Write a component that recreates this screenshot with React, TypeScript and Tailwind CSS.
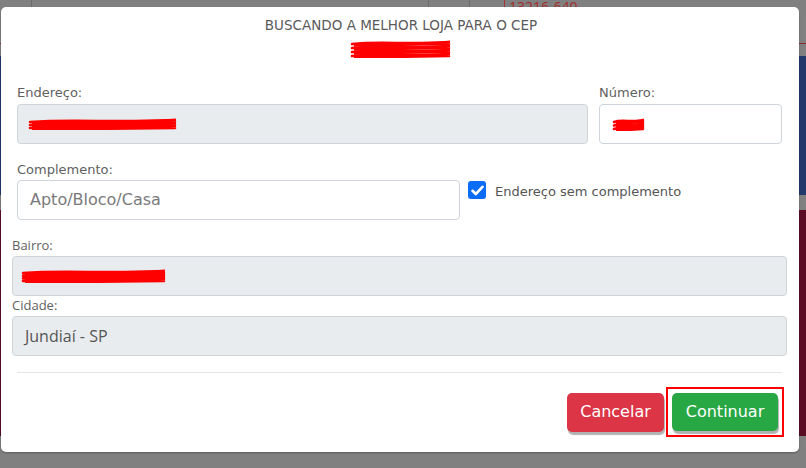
import React from "react";

const FONT = { fontFamily: '"DejaVu Sans", "Open Sans", sans-serif' };
const NARROW = { fontFamily: '"Open Sans", "Liberation Sans", sans-serif' };

// rabisco vermelho que esconde dados pessoais
const Scribble = ({ w, h, rows = 3 }: { w: number; h: number; rows?: number }) => {
  const lines = [];
  for (let i = 0; i < rows; i++) {
    const y = 3 + (i * (h - 6)) / Math.max(rows - 1, 1);
    lines.push(
      <path
        key={i}
        d={`M2 ${y + 1} C ${w * 0.3} ${y - 2}, ${w * 0.6} ${y + 2}, ${w - 2} ${y - 1} L 4 ${y + 2.5} L ${w - 3} ${y + 1}`}
        stroke="#ff0000"
        strokeWidth={2.6}
        fill="none"
        strokeLinecap="round"
      />
    );
  }
  return (
    <svg width={w} height={h} viewBox={`0 0 ${w} ${h}`}>
      {lines}
    </svg>
  );
};

const Label = ({ children, narrow }: { children: React.ReactNode; narrow?: boolean }) => (
  <div className="text-[13px] leading-4 text-[#5f5f5f]" style={narrow ? NARROW : FONT}>
    {children}
  </div>
);

const Background = () => (
  <div className="w-[806px] h-[468px] bg-[#808080] flex flex-col">
    <div className="h-[56px] flex flex-col">
      <div className="h-[43px] flex">
        <div className="w-[32px] border-r border-[#6a6a6a]" />
        <div className="w-[397px] border-r border-[#6a6a6a]" />
        <div className="w-[41px] border-r border-[#6a6a6a]" />
        <div className="w-[35px] border-r border-[#a33]" />
        <div className="text-[14px] leading-4 -mt-[1px] pl-1 text-[#a42a2a]" style={NARROW}>
          13216-640
        </div>
      </div>
      <div className="h-px bg-[#8c2b2b]" />
    </div>
    <div className="h-[139px] bg-[#213a6b]" />
    <div className="h-[15px]" />
    <div className="h-[226px] bg-[#5b0c25]" />
  </div>
);

const CheckIcon = () => (
  <svg width="13" height="11" viewBox="0 0 13 11">
    <path d="M1.5 5.8 L4.8 9 L11.5 1.8" stroke="#fff" strokeWidth="2.6" fill="none" strokeLinecap="round" strokeLinejoin="round" />
  </svg>
);

const Modal = () => (
  <div className="absolute left-[1px] top-[7px] w-[798px] h-[445px] bg-white rounded-[5px] shadow-[0_1px_2px_rgba(0,0,0,0.3)] flex flex-col">
    {/* cabeçalho */}
    <div className="pt-[10px] flex flex-col items-center">
      <div className="text-[13.5px] leading-4 text-[#5a5a5a] ml-[2px]" style={FONT}>
        BUSCANDO A MELHOR LOJA PARA O CEP
      </div>
      <div className="mt-[7px] ml-[2px]">
        <Scribble w={102} h={18} rows={4} />
      </div>
    </div>

    {/* endereço + número */}
    <div className="mt-[27px] pl-[16px] pr-[17px] flex gap-[11px]">
      <div className="w-[571px] flex flex-col">
        <Label>Endereço:</Label>
        <div className="mt-[3px] h-[40px] rounded-[4px] border border-[#ced4da] bg-[#e9ecef] flex items-center pl-[10px]">
          <Scribble w={150} h={12} rows={3} />
        </div>
      </div>
      <div className="flex-1 flex flex-col">
        <Label>Número:</Label>
        <div className="mt-[3px] h-[40px] rounded-[4px] border border-[#ced4da] bg-white flex items-center pl-[12px]">
          <Scribble w={34} h={13} rows={3} />
        </div>
      </div>
    </div>

    {/* complemento */}
    <div className="mt-[18px] pl-[16px] flex items-end gap-[8px]">
      <div className="w-[443px] flex flex-col">
        <Label>Complemento:</Label>
        <div className="mt-[2px] h-[40px] rounded-[4px] border border-[#ced4da] bg-white flex items-center pl-[12px] text-[16px] text-[#7a7a7a]" style={FONT}>
          Apto/Bloco/Casa
        </div>
      </div>
      <div className="h-[40px] flex items-start gap-[9px] pt-[1px]">
        <div className="w-[18px] h-[18px] rounded-[3px] bg-[#0b6cf7] flex items-center justify-center">
          <CheckIcon />
        </div>
        <div className="text-[13px] leading-[22px] text-[#555]" style={FONT}>
          Endereço sem complemento
        </div>
      </div>
    </div>

    {/* bairro + cidade */}
    <div className="mt-[17px] pl-[11px] pr-[12px] flex flex-col">
      <Label narrow>Bairro:</Label>
      <div className="mt-[3px] h-[40px] rounded-[4px] border border-[#ced4da] bg-[#e9ecef] flex items-center pl-[8px]">
        <Scribble w={146} h={14} rows={4} />
      </div>
      <div className="mt-[1px]">
        <Label narrow>Cidade:</Label>
      </div>
      <div className="mt-[3px] h-[40px] rounded-[4px] border border-[#ced4da] bg-[#e9ecef] flex items-center pl-[12px] text-[16px] text-[#555]" style={NARROW}>
        Jundiaí - SP
      </div>
    </div>

    <div className="mt-[16px] ml-[16px] mr-[17px] h-px bg-[#e5e5e5]" />

    {/* rodapé */}
    <div className="mt-[14px] pr-[15px] flex justify-end items-center gap-[2px]">
      <button className="w-[97px] h-[39px] rounded-[5px] bg-[#dc3545] text-white text-[16px] shadow-[1px_3px_1px_rgba(0,0,0,0.3)]" style={FONT}>
        Cancelar
      </button>
      <div className="border-2 border-[#ff0000] p-[4px]">
        <button className="w-[106px] h-[38px] rounded-[5px] bg-[#28a745] text-white text-[16px] shadow-[1px_3px_1px_rgba(0,0,0,0.3)]" style={FONT}>
          Continuar
        </button>
      </div>
    </div>
  </div>
);

export default function App() {
  return (
    <div className="relative w-[806px] h-[468px] overflow-hidden">
      <Background />
      <Modal />
    </div>
  );
}
